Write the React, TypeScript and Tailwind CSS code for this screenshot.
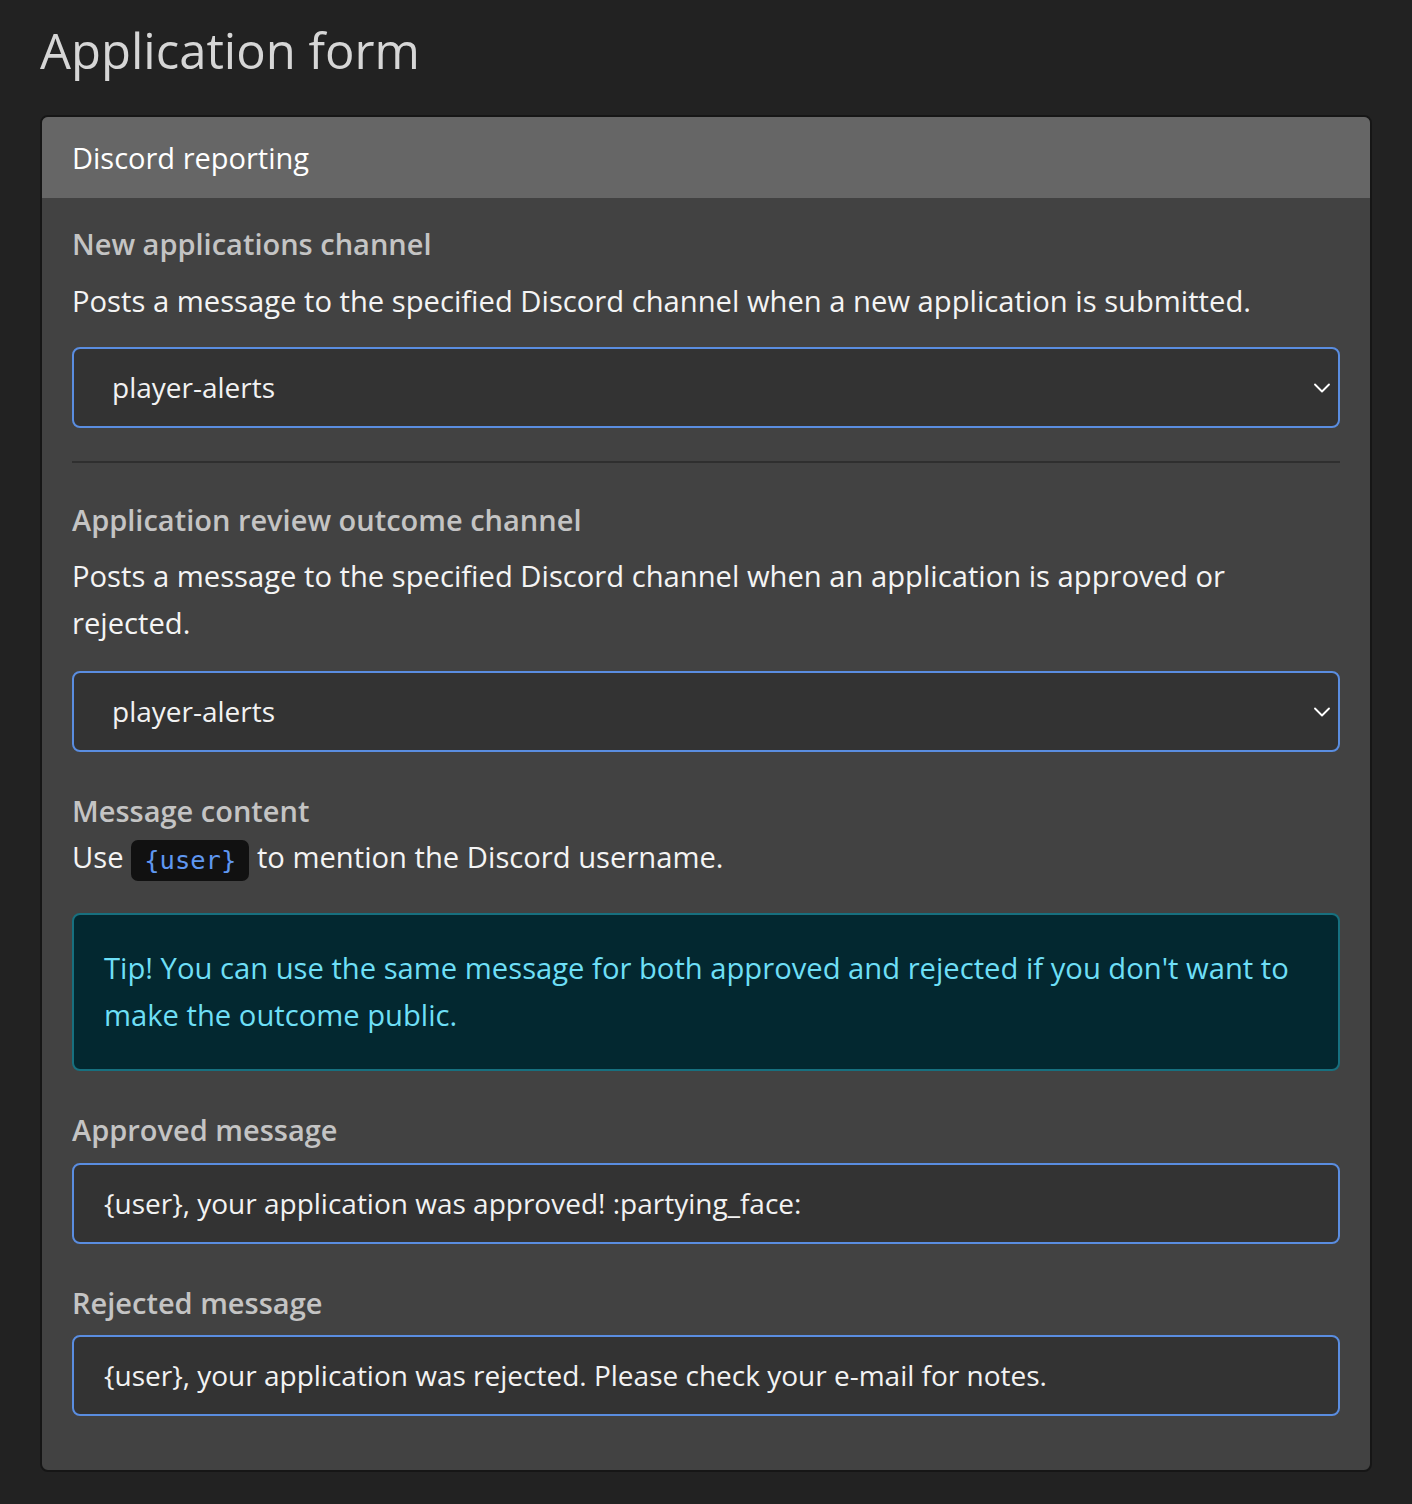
import { ChevronDown } from 'lucide-react';

interface FieldProps {
  value: string;
}

function ChannelSelect({ value }: FieldProps) {
  return (
    <div className="relative h-[81px] rounded-[8px] border-2 border-[#5a8de0] bg-[#333333] flex items-center pl-[38px] pr-[50px]">
      <span className="text-[28px] leading-[47px] text-[#f2f2f2]">{value}</span>
      <ChevronDown className="absolute right-[2px] top-1/2 -translate-y-1/2 w-[28px] h-[28px] text-white" strokeWidth={1.6} />
    </div>
  );
}

function TextInput({ value }: FieldProps) {
  return (
    <div className="h-[81px] rounded-[8px] border-2 border-[#5a8de0] bg-[#333333] flex items-center px-[30px]">
      <span className="text-[28px] leading-[47px] text-[#f2f2f2]">{value}</span>
    </div>
  );
}

function Label({ children }: { children: React.ReactNode }) {
  return <div className="text-[29px] leading-[47px] font-semibold text-[#c4c4c4]">{children}</div>;
}

export default function App() {
  return (
    <div className="min-h-screen bg-[#222222] font-['Open_Sans',sans-serif] px-[41px] pt-[18px] pb-[33px]">
      <h1 className="text-[49px] leading-[64px] text-[#d6d6d6] -ml-[1px]">Application form</h1>

      <div className="mt-[33px] w-[1332px] -ml-[1px] rounded-[8px] border-2 border-[#161616] bg-[#424242] overflow-hidden">
        <div className="h-[81px] bg-[#666666] flex items-center px-[30px]">
          <span className="text-[29px] text-white">Discord reporting</span>
        </div>

        <div className="px-[30px] pt-[22px] pb-[54px]">
          {/* New applications */}
          <Label>New applications channel</Label>
          <p className="mt-[11px] text-[29.2px] leading-[47px] text-[#f4f4f4]">
            Posts a message to the specified Discord channel when a new application is submitted.
          </p>
          <div className="mt-[22px]">
            <ChannelSelect value="player-alerts" />
          </div>

          <div className="mt-[33px] h-[2px] bg-[#2f2f2f]" />

          {/* Review outcome */}
          <div className="mt-[33px]">
            <Label>Application review outcome channel</Label>
          </div>
          <p className="mt-[10px] text-[29.2px] leading-[47px] text-[#f4f4f4]">
            Posts a message to the specified Discord channel when an application is approved or rejected.
          </p>
          <div className="mt-[24px]">
            <ChannelSelect value="player-alerts" />
          </div>

          {/* Message content */}
          <div className="mt-[35px]">
            <Label>Message content</Label>
          </div>
          <p className="text-[29.2px] leading-[47px] text-[#f4f4f4]">
            Use{' '}
            <code className="inline-block align-middle rounded-[7px] bg-[#111111] px-[13px] text-[25.5px] leading-[41px] text-[#5f97f0] font-['DejaVu_Sans_Mono',monospace]">
              {'{user}'}
            </code>{' '}
            to mention the Discord username.
          </p>

          <div className="mt-[32px] rounded-[8px] border-2 border-[#17707f] bg-[#032830] px-[30px] py-[30px] text-[29.2px] leading-[47px] text-[#6edff6]">
            Tip! You can use the same message for both approved and rejected if you don't want to make the outcome public.
          </div>

          <div className="mt-[35px]">
            <Label>Approved message</Label>
          </div>
          <div className="mt-[10px]">
            <TextInput value="{user}, your application was approved! :partying_face:" />
          </div>

          <div className="mt-[35px]">
            <Label>Rejected message</Label>
          </div>
          <div className="mt-[9px]">
            <TextInput value="{user}, your application was rejected. Please check your e-mail for notes." />
          </div>
        </div>
      </div>
    </div>
  );
}
